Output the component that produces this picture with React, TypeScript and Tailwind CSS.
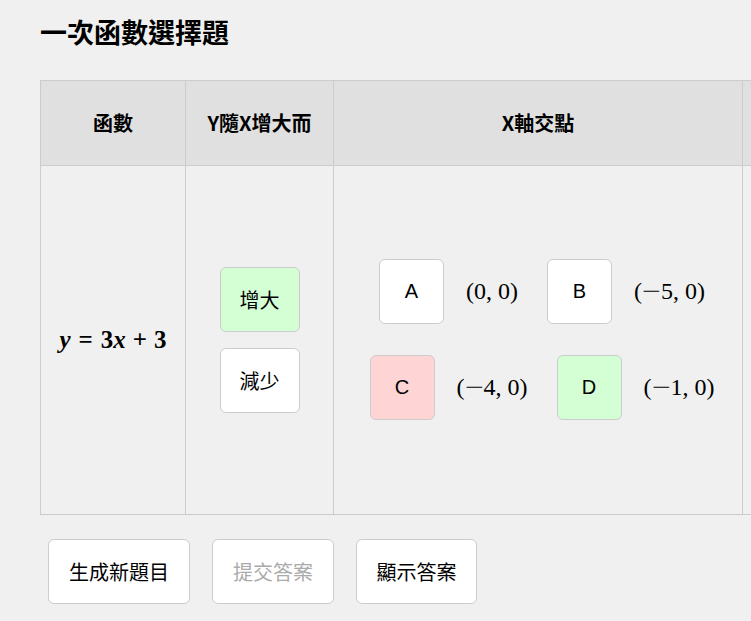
import React from 'react'

const cjk = "font-['Noto_Sans_CJK_TC','Noto_Sans',sans-serif]"
const math = "font-['Liberation_Serif','DejaVu_Serif',serif]"

const options = [
  [
    { key: 'A', x: '0', tone: 'bg-white' },
    { key: 'B', x: '−5', tone: 'bg-white' },
  ],
  [
    { key: 'C', x: '−4', tone: 'bg-[#ffd4d4]' },
    { key: 'D', x: '−1', tone: 'bg-[#d4ffd4]' },
  ],
]

const Coord = ({ x }: { x: string }) => {
  const neg = x.startsWith('−')
  return (
    <span className={`${math} text-[24px] whitespace-nowrap`}>
      (
      {neg && <span className="inline-block w-[19px] scale-x-[1.4] text-center">−</span>}
      {neg ? x.slice(1) : x}, 0)
    </span>
  )
}

const App = () => {
  return (
    <div className={`min-h-screen w-[751px] overflow-hidden bg-[#f0f0f0] text-black ${cjk}`}>
      <div className="px-10 pt-3">
        <h2 className="text-[27px] font-bold leading-[40px]">一次函數選擇題</h2>

        <table className="mt-[28px] w-[860px] table-fixed border-collapse">
          <thead>
            <tr className="h-[85px] bg-[#e0e0e0] text-[20px] font-bold">
              <th className="w-[145px] border border-[#cccccc]">函數</th>
              <th className="w-[148px] border border-[#cccccc]">Y隨X增大而</th>
              <th className="w-[409px] border border-[#cccccc]">X軸交點</th>
              <th className="border border-[#cccccc]"></th>
            </tr>
          </thead>
          <tbody>
            <tr className="h-[349px]">
              <td className="border border-[#cccccc] text-center">
                <span className={`${math} text-[25px] font-bold whitespace-nowrap`}>
                  <i>y</i>
                  <span className="mx-[8px]">=</span>3<i>x</i>
                  <span className="mx-[7px]">+</span>3
                </span>
              </td>
              <td className="border border-[#cccccc]">
                <div className="flex flex-col items-center gap-4 text-[20px]">
                  <button className="flex h-[65px] w-[80px] items-center justify-center rounded-md border border-[#cccccc] bg-[#d4ffd4]">
                    增大
                  </button>
                  <button className="flex h-[65px] w-[80px] items-center justify-center rounded-md border border-[#cccccc] bg-white">
                    減少
                  </button>
                </div>
              </td>
              <td className="border border-[#cccccc]">
                <div className="flex flex-col items-center gap-[31px] pb-[2px] pl-2">
                  {options.map((row, i) => (
                    <div key={i} className="flex items-center gap-[29px]">
                      {row.map((o) => (
                        <div key={o.key} className="flex items-center gap-[22px]">
                          <button
                            className={`flex h-[65px] w-[65px] items-center justify-center rounded-md border border-[#cccccc] font-['Liberation_Sans',sans-serif] text-[20px] ${o.tone}`}
                          >
                            {o.key}
                          </button>
                          <Coord x={o.x} />
                        </div>
                      ))}
                    </div>
                  ))}
                </div>
              </td>
              <td className="border border-[#cccccc]"></td>
            </tr>
          </tbody>
        </table>

        <div className="ml-2 mt-6 flex gap-[22px] text-[20px]">
          <button className="h-[65px] w-[142px] rounded-md border border-[#cccccc] bg-white">
            生成新題目
          </button>
          <button className="h-[65px] w-[122px] rounded-md border border-[#cccccc] bg-white text-[#aaaaaa]">
            提交答案
          </button>
          <button className="h-[65px] w-[121px] rounded-md border border-[#cccccc] bg-white">
            顯示答案
          </button>
        </div>
      </div>
    </div>
  )
}

export default App
